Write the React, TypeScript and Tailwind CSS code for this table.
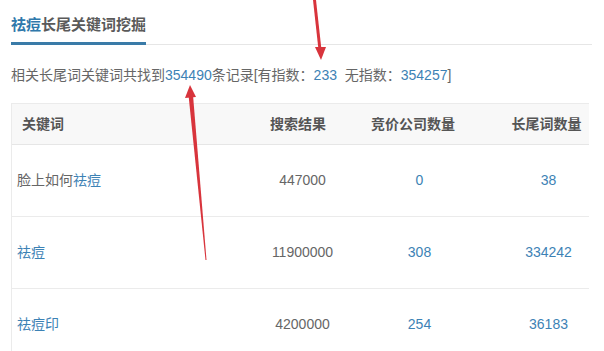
import React from "react";

const font = { fontFamily: '"Liberation Sans", "Noto Sans CJK SC", sans-serif' };

const B = ({ children }: { children: React.ReactNode }) => (
  <span className="text-[#3d82b5]">{children}</span>
);

type Row = { kw: React.ReactNode; a: string; b: string; c: string };

const rows: Row[] = [
  { kw: <>脸上如何<B>祛痘</B></>, a: "447000", b: "0", c: "38" },
  { kw: <B>祛痘</B>, a: "11900000", b: "308", c: "334242" },
  { kw: <B>祛痘印</B>, a: "4200000", b: "254", c: "36183" },
];

export default function App() {
  return (
    <div className="relative w-[604px] h-[351px] overflow-hidden bg-white" style={font}>
      <div className="pl-[11px] pr-[12px]">
        <div className="flex border-b border-[#e6e6e6]">
          <div className="pt-[15px] pb-[7px] -mb-px border-b-[3px] border-[#3a7ba8] text-[15px] leading-[20px] font-bold whitespace-nowrap">
            <span className="text-[#2f78ab]">祛痘</span>
            <span className="text-[#5a5a5a]">长尾关键词挖掘</span>
          </div>
        </div>
      </div>
      <div className="pl-[11px] mt-[20px] text-[14px] leading-[20px] text-[#666] whitespace-nowrap">
        相关长尾词关键词共找到<B>354490</B>条记录[有指数：<B>233</B>&nbsp;&nbsp;无指数：<B>354257</B>]
      </div>
      <div className="ml-[11px] w-[578px] mt-[18px] border-l border-t border-[#ebebeb] text-[14px]">
        <div className="grid grid-cols-[226px_120px_110px_1fr] h-[41px] bg-[#f8f8f8] border-b border-[#e6e6e6] items-center font-bold text-[#555]">
          <div className="pl-[10px]">关键词</div>
          <div className="flex justify-center">搜索结果</div>
          <div className="flex justify-center">竞价公司数量</div>
          <div className="flex justify-center pl-[36px]">长尾词数量</div>
        </div>
        {rows.map((r, i) => (
          <div
            key={i}
            className="grid grid-cols-[226px_120px_110px_1fr] h-[72px] border-b border-[#ebebeb] items-center text-[#666]"
          >
            <div className="pl-[5px]">{r.kw}</div>
            <div className="flex justify-center pl-[9px]">{r.a}</div>
            <div className="flex justify-center pl-[13px] text-[#3d82b5]">{r.b}</div>
            <div className="flex justify-center pl-[40px] text-[#3d82b5]">{r.c}</div>
          </div>
        ))}
      </div>
      <svg className="absolute left-0 top-0 pointer-events-none" width="604" height="351" viewBox="0 0 604 351">
        <polygon points="313,0 316,0 321.5,50 318.5,50" fill="#d8343c" />
        <polygon points="315,47 326,47 321,60" fill="#d8343c" />
        <polygon points="188.5,95 193,95 206.5,260 205.5,260" fill="#d8343c" />
        <polygon points="190,85 185,98 196,97" fill="#d8343c" />
      </svg>
    </div>
  );
}
